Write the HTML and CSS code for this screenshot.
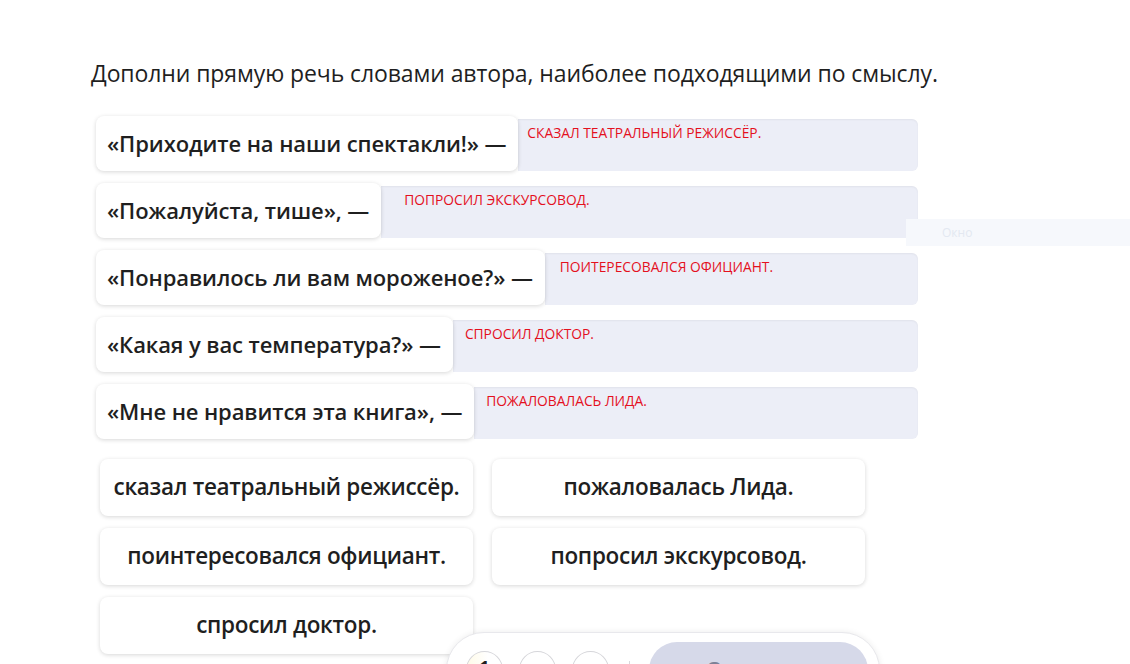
FILE: index.html
```html
<!DOCTYPE html>
<html lang="ru">
<head>
    <meta charset="UTF-8">
    <meta name="viewport" content="width=device-width, initial-scale=1.0">
    <title>Задание</title>

    <link rel="stylesheet" href="styles.css">

</head>
<body>

    <div id="wrapper">

        <h1 class="task_title">Дополни прямую речь словами автора, наиболее подходящими по смыслу.</h1>

        <div class="pairs">

            <div class="pair">
                <div class="phrase">«Приходите на наши спектакли!» —</div>
                <div class="slot slot_1">сказал театральный режиссёр.</div>
            </div>

            <div class="pair">
                <div class="phrase">«Пожалуйста, тише», —</div>
                <div class="slot slot_2">попросил экскурсовод.</div>
            </div>

            <div class="pair">
                <div class="phrase">«Понравилось ли вам мороженое?» —</div>
                <div class="slot slot_3">поитересовался официант.</div>
            </div>

            <div class="pair">
                <div class="phrase">«Какая у вас температура?» —</div>
                <div class="slot slot_4">спросил доктор.</div>
            </div>

            <div class="pair">
                <div class="phrase">«Мне не нравится эта книга», —</div>
                <div class="slot slot_5">пожаловалась Лида.</div>
            </div>

        </div>

        <div class="answers">
            <div class="answer">сказал театральный режиссёр.</div>
            <div class="answer">пожаловалась Лида.</div>
            <div class="answer">поинтересовался официант.</div>
            <div class="answer">попросил экскурсовод.</div>
            <div class="answer">спросил доктор.</div>
        </div>

    </div>

    <div class="hint">Окно</div>

    <div class="toolbar">
        <div class="step step_current">1</div>
        <div class="step"></div>
        <div class="step"></div>
        <div class="toolbar_divider"></div>
        <div class="send_button">Ответить</div>
    </div>

</body>
</html>
```

FILE: styles.css
```css
*{
    box-sizing: border-box;
}

body{
    margin: 0;
    padding: 0;

    width: 100vw;
    height: 100vh;
    overflow: hidden;

    background: #fff;
    font-family: "Open Sans", "Noto Sans", sans-serif;
    color: #1f1f1f;
}

#wrapper{
    padding: 58px 0 0 91px;
}

.task_title{
    margin: 0 0 28px 0;

    font-size: 23px;
    font-weight: 400;
    line-height: 30px;
    letter-spacing: -0.1px;
}

.pairs{
    margin-left: 5px;
    width: 822px;

    display: flex;
    flex-direction: column;
    gap: 12px;
}

.pair{
    height: 55px;

    display: flex;
    align-items: flex-end;
}

.phrase{
    position: relative;
    z-index: 1;

    height: 55px;
    padding: 0 12px 2px 11px;

    display: flex;
    align-items: center;

    background: #fff;
    border-radius: 8px;
    box-shadow: 0 1px 4px rgba(0, 0, 0, 0.16);

    font-size: 22px;
    font-weight: 600;
    letter-spacing: -0.1px;
    white-space: nowrap;
}

.slot{
    flex: 1;
    height: 52px;
    padding-top: 4px;

    background: #eceef7;
    border-radius: 0 6px 6px 0;
    box-shadow: inset 0 1px 2px rgba(0, 0, 0, 0.05);

    color: #e4101e;
    font-size: 13.8px;
    text-transform: uppercase;
}

.slot_1{ padding-left: 9px; }
.slot_2{ padding-left: 23px; }
.slot_3{ padding-left: 15px; }
.slot_4{ padding-left: 12px; }
.slot_5{ padding-left: 12px; }

.answers{
    margin: 20px 0 0 9px;
    width: 765px;

    display: grid;
    grid-template-columns: 373px 373px;
    column-gap: 19px;
    row-gap: 12px;
}

.answer{
    height: 57px;
    padding-bottom: 2px;

    display: grid;
    place-items: center;

    background: #fff;
    border-radius: 8px;
    box-shadow: 0 1px 4px rgba(0, 0, 0, 0.16);

    font-size: 22.5px;
    font-weight: 600;
    letter-spacing: -0.3px;
}

.hint{
    position: absolute;
    top: 219px;
    left: 906px;

    width: 224px;
    height: 27px;
    padding-left: 36px;

    background: #f6f8fc;

    color: #e3e8f1;
    font-size: 12px;
    line-height: 27px;
}

.toolbar{
    position: absolute;
    top: 632px;
    left: 446px;

    width: 434px;
    height: 76px;
    padding: 9px 11px 0 19px;

    display: flex;
    align-items: flex-start;
    gap: 16px;

    background: #fff;
    border: 1px solid #e8e8ec;
    border-radius: 38px;
    box-shadow: 0 0 6px rgba(0, 0, 0, 0.08);
}

.step{
    width: 37px;
    height: 37px;
    margin-top: 9px;
    padding-top: 3px;

    display: flex;
    justify-content: center;

    border: 1px solid #d6d6da;
    border-radius: 50%;

    font-size: 18px;
    font-weight: 700;
    line-height: 24px;
}

.step_current{
    background: linear-gradient(to right, #fffbe8 0%, #fff 60%);
}

.toolbar_divider{
    width: 1px;
    height: 20px;
    margin: 19px 3px 0 4px;

    background: #d8d8dc;
}

.send_button{
    width: 220px;
    height: 56px;
    padding-top: 12px;

    display: flex;
    justify-content: center;

    background: #d6d9e9;
    border-radius: 28px;

    color: #7d8297;
    font-size: 22px;
    font-weight: 600;
    line-height: 30px;
}
```
